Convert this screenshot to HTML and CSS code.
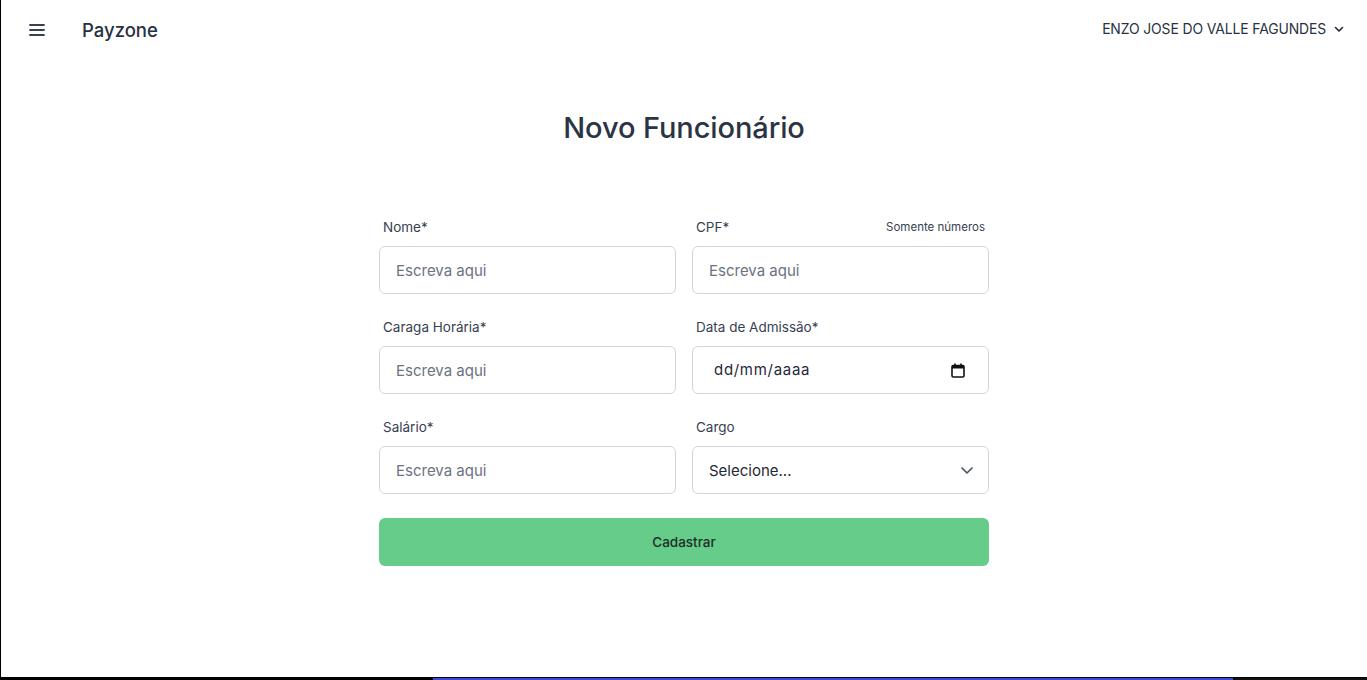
FILE: index.html
```html
<!DOCTYPE html>
<html lang="pt-BR">
<head>
<meta charset="utf-8">
<title>Payzone - Novo Funcionário</title>
<link rel="stylesheet" href="styles.css">
</head>
<body>
<div class="app">
  <header class="topbar">
    <div class="brand">
      <button class="menu-btn" aria-label="Menu">
        <svg width="16" height="14" viewBox="0 0 16 14"><path d="M1 2h14M1 7h14M1 12h14" stroke="#374151" stroke-width="1.8" stroke-linecap="round"/></svg>
      </button>
      <span class="logo">Payzone</span>
    </div>
    <div class="user">
      <span>ENZO JOSE DO VALLE FAGUNDES</span>
      <svg width="10" height="7" viewBox="0 0 10 7"><path d="M1.5 1.5l3.5 3.5 3.5-3.5" fill="none" stroke="#1f2937" stroke-width="1.6" stroke-linecap="round" stroke-linejoin="round"/></svg>
    </div>
  </header>
  <main class="content">
    <h1 class="title">Novo Funcionário</h1>
    <form class="form">
      <div class="grid">
        <div class="field">
          <div class="label-row"><label>Nome*</label></div>
          <div class="input"><span class="ph">Escreva aqui</span></div>
        </div>
        <div class="field">
          <div class="label-row"><label>CPF*</label><span class="hint">Somente números</span></div>
          <div class="input"><span class="ph">Escreva aqui</span></div>
        </div>
        <div class="field">
          <div class="label-row"><label>Caraga Horária*</label></div>
          <div class="input"><span class="ph">Escreva aqui</span></div>
        </div>
        <div class="field">
          <div class="label-row"><label>Data de Admissão*</label></div>
          <div class="input date"><span class="val">dd/mm/aaaa</span>
            <svg width="14" height="15" viewBox="0 0 14 15"><rect x="1" y="2.5" width="12" height="11.5" rx="1.2" fill="none" stroke="#111" stroke-width="1.6"/><rect x="1" y="2.5" width="12" height="3" fill="#111"/><path d="M4 0.5v3M10 0.5v3" stroke="#111" stroke-width="1.6"/></svg>
          </div>
        </div>
        <div class="field">
          <div class="label-row"><label>Salário*</label></div>
          <div class="input"><span class="ph">Escreva aqui</span></div>
        </div>
        <div class="field">
          <div class="label-row"><label>Cargo</label></div>
          <div class="input select"><span class="val">Selecione...</span>
            <svg width="14" height="9" viewBox="0 0 14 9"><path d="M2 2l5 5 5-5" fill="none" stroke="#4b5563" stroke-width="1.7" stroke-linecap="round" stroke-linejoin="round"/></svg>
          </div>
        </div>
      </div>
      <button type="button" class="submit">Cadastrar</button>
    </form>
  </main>
</div>
<div class="taskbar"><div class="tb-left"></div><div class="tb-mid"></div><div class="tb-right"></div></div>
</body>
</html>
```

FILE: styles.css
```css
* { box-sizing: border-box; }
html, body { margin: 0; padding: 0; }
body {
  font-family: Inter, "Noto Sans", "Liberation Sans", sans-serif;
  background: #fff;
  color: #1f2937;
  width: 1367px;
  height: 680px;
  overflow: hidden;
}
.app {
  height: 677px;
  border-left: 1px solid #000;
  display: flex;
  flex-direction: column;
}
.topbar {
  height: 60px;
  display: flex;
  align-items: center;
  justify-content: space-between;
  padding: 0 23px 0 27px;
}
.brand { display: flex; align-items: center; gap: 36px; }
.menu-btn {
  border: 0; background: none; padding: 0; width: 18px; height: 14px;
  display: flex; align-items: center; justify-content: center; cursor: pointer;
}
.logo { font-size: 18.5px; font-weight: 500; color: #273142; }
.user {
  display: flex; align-items: center; gap: 8px;
  font-size: 13.9px; color: #273142; letter-spacing: -0.1px;
  padding-bottom: 2px;
}
.content { display: flex; flex-direction: column; align-items: center; }
.title {
  margin: 50px 0 0;
  font-size: 29px;
  font-weight: 500;
  color: #2a3444;
  line-height: 36px;
  letter-spacing: -0.1px;
}
.form { width: 610px; margin-top: 71px; }
.grid {
  display: grid;
  grid-template-columns: 1fr 1fr;
  column-gap: 16px;
  row-gap: 23px;
}
.field { display: flex; flex-direction: column; }
.label-row {
  display: flex; justify-content: space-between; align-items: center;
  padding: 0 4px; height: 20px; margin-bottom: 9px;
}
.label-row label { font-size: 13.5px; color: #374151; }
.hint { font-size: 11.5px; color: #374151; }
.input {
  height: 48px;
  border: 1px solid #d1d5db;
  border-radius: 6px;
  display: flex; align-items: center; justify-content: space-between;
  padding: 0 16px;
  font-size: 15px;
}
.ph { color: #6b7280; }
.val { color: #1f2937; }
.date { padding: 0 23px 0 21px; }
.date .val { letter-spacing: 0.7px; font-size: 15px; padding-bottom: 2px; }
.select { padding: 0 14px 0 16px; }
.submit {
  margin-top: 24px;
  width: 100%;
  height: 48px;
  border: 0;
  border-radius: 6px;
  background: #66cc8a;
  color: #1f2f26;
  font-family: inherit;
  font-size: 13.5px;
  font-weight: 500;
  cursor: pointer;
}
.taskbar {
  height: 3px;
  background: #000;
  display: flex;
  border-top: 1px solid #000;
}
.tb-left { width: 433px; background: #000; }
.tb-mid { width: 800px; background: #3b4cd8; }
.tb-right { flex: 1; background: #111; }
```
